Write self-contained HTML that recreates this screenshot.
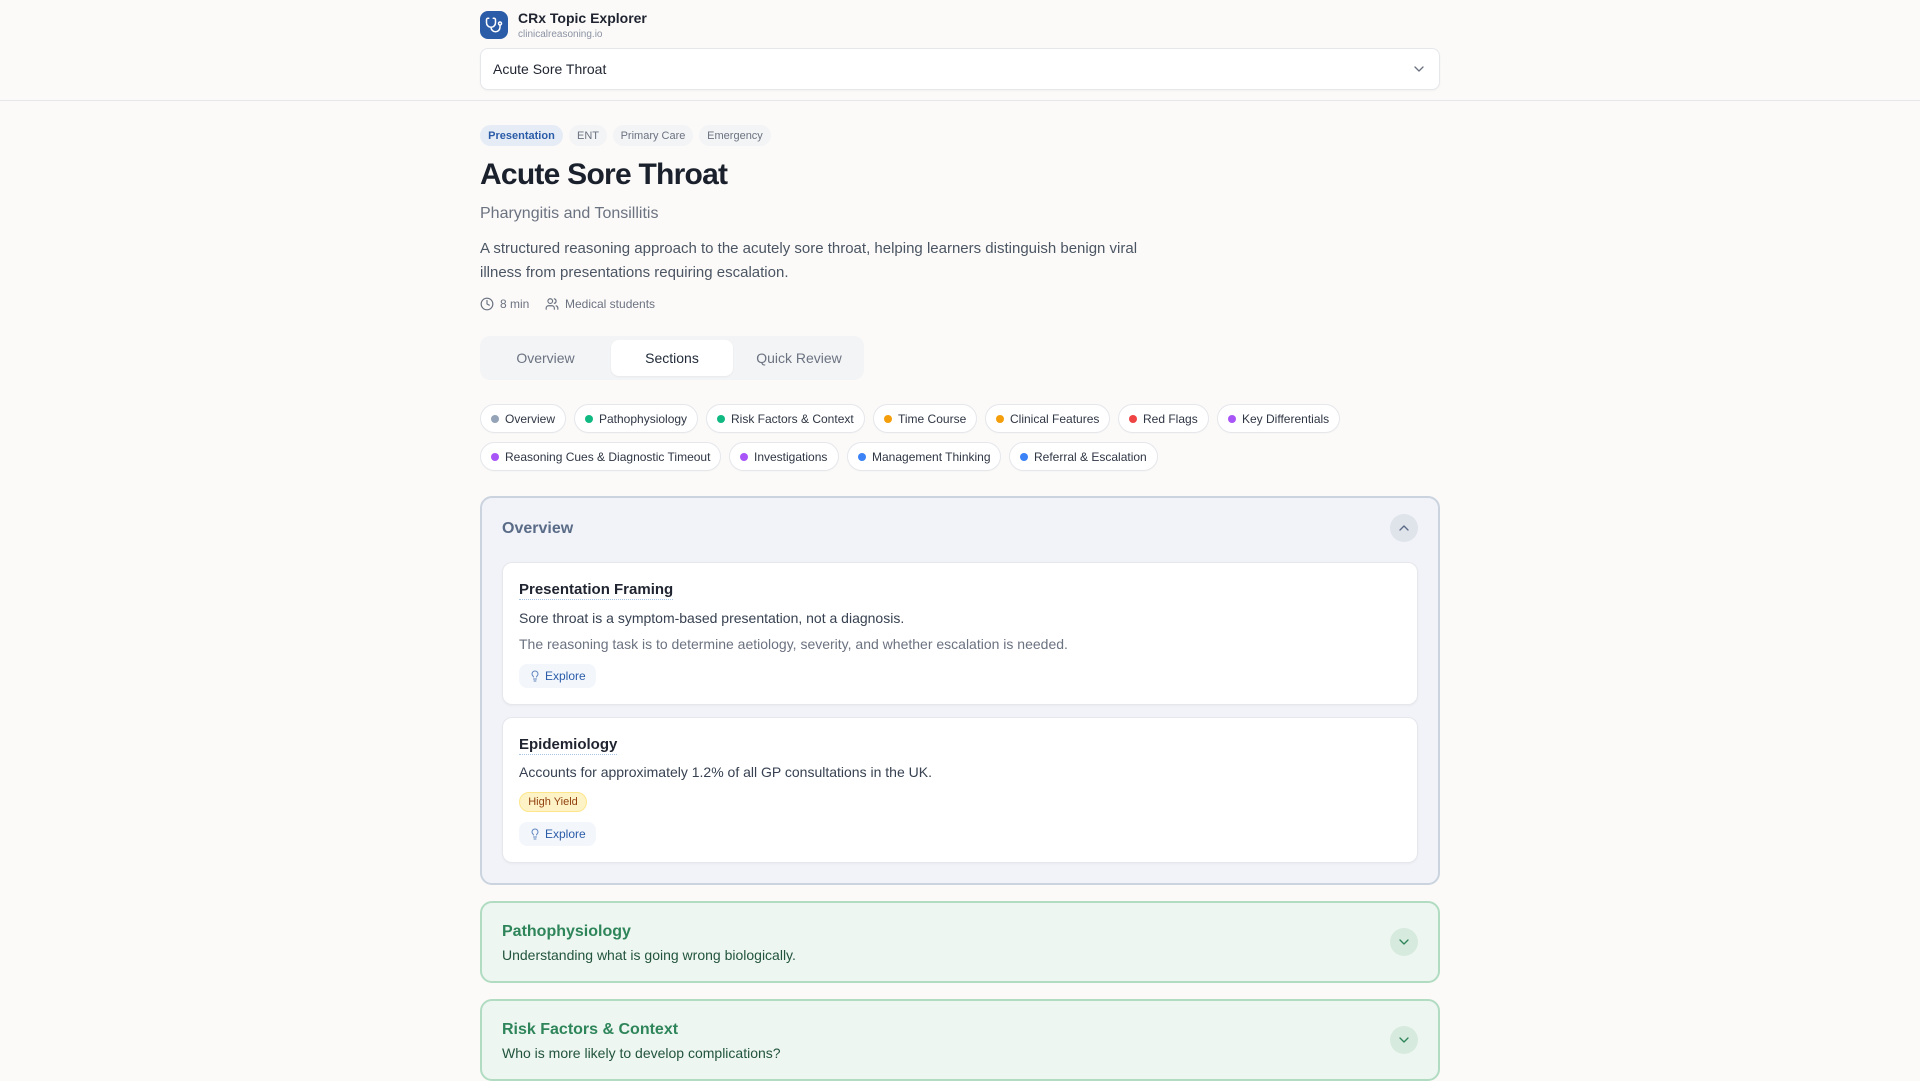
<!DOCTYPE html>
<html lang="en"><head><meta charset="utf-8"><title>CRx Topic Explorer</title>
<style>
*{box-sizing:border-box;margin:0;padding:0}
html,body{width:1920px;height:1080px;overflow:hidden;background:#fbfaf8;font-family:"Liberation Sans",sans-serif;color:#1f2430}
.a{position:absolute;white-space:nowrap}
#hdr{left:0;top:0;width:1920px;height:101px;border-bottom:1px solid #e5e7eb}
#logo{left:480px;top:11px;width:28px;height:28px;border-radius:8px;background:#2b5ca8;display:flex;align-items:center;justify-content:center}
#select{left:480px;top:48px;width:960px;height:42px;background:#fff;border:1px solid #e5e7eb;border-radius:8px;box-shadow:0 1px 2px rgba(0,0,0,.04);font-size:14px;line-height:40px;padding-left:12px;color:#1f2430}
.tag{top:125px;height:21px;border-radius:10.5px;background:#f3f4f6;color:#6b7280;font-size:11px;line-height:23px;text-align:center}
.tabs{left:480px;top:336px;width:384px;height:44px;border-radius:10px;background:#f3f4f6}
.tab{top:340px;height:36px;width:122px;line-height:36px;text-align:center;font-size:14px;color:#6b7280}
.pill{height:29px;background:#fff;border:1px solid #e5e7eb;border-radius:15px;font-size:12px;line-height:29px;color:#2f3644;padding-left:24px;box-shadow:0 1px 1px rgba(0,0,0,.02)}
.pill i{position:absolute;left:10px;top:9.5px;width:8px;height:8px;border-radius:50%}
.card{left:502px;width:916px;background:#fff;border:1px solid #e5e7eb;border-radius:10px;box-shadow:0 1px 2px rgba(0,0,0,.04)}
.ct{font-size:15px;font-weight:700;color:#1f2430;left:519px;border-bottom:1px dotted #a9c6e8;line-height:17px;height:19px}
.tx{font-size:14px;left:519px;line-height:18px;color:#374151}
.exp{left:519px;width:77px;height:24px;background:#f3f7fc;border-radius:8px;color:#2b5ca8;font-size:12px;line-height:24px;padding-left:26px}
.exp svg{position:absolute;left:10px;top:6px}
.sec{left:480px;width:960px;border:2px solid #b1dcc2;border-radius:12px;background:#edf6f1}
.st{left:502px;font-size:16px;font-weight:700;color:#2f855a;line-height:20px}
.ss{left:502px;font-size:14px;color:#22543d;line-height:18px}
.cb{width:28px;height:28px;border-radius:50%;left:1390px;display:flex;align-items:center;justify-content:center}
</style></head><body>

<div class="a" id="hdr"></div>
<div class="a" id="logo"><svg width="18" height="18" viewBox="0 0 24 24" fill="none" stroke="#fff" stroke-width="2" stroke-linecap="round" stroke-linejoin="round"><path d="M5 3H4a2 2 0 0 0-2 2v4a6 6 0 0 0 12 0V5a2 2 0 0 0-2-2h-1"/><path d="M8 15a6 6 0 0 0 12 0v-3"/><circle cx="20" cy="10" r="2"/></svg></div>
<div class="a" style="left:518px;top:10px;font-size:14px;font-weight:700;line-height:17px;color:#1f2430">CRx Topic Explorer</div>
<div class="a" style="left:518px;top:28px;font-size:10px;line-height:13px;color:#8b92a3">clinicalreasoning.io</div>
<div class="a" id="select">Acute Sore Throat</div>
<svg class="a" style="left:1411px;top:61px" width="16" height="16" viewBox="0 0 24 24" fill="none" stroke="#6b7280" stroke-width="2" stroke-linecap="round" stroke-linejoin="round"><path d="m6 9 6 6 6-6"/></svg>

<div class="a tag" style="left:480px;width:83px;background:#e6ecf5;color:#2b5ca8;font-weight:700">Presentation</div>
<div class="a tag" style="left:569px;width:38px">ENT</div>
<div class="a tag" style="left:613px;width:80px">Primary Care</div>
<div class="a tag" style="left:699px;width:72px">Emergency</div>

<div class="a" style="left:480px;top:157px;font-size:30px;font-weight:700;line-height:36px;letter-spacing:-.75px;color:#1a202c">Acute Sore Throat</div>
<div class="a" style="left:480px;top:204px;font-size:16px;line-height:20px;color:#6b7280">Pharyngitis and Tonsillitis</div>
<div class="a" style="left:480px;top:237px;font-size:15px;line-height:24px;color:#4b5563">A structured reasoning approach to the acutely sore throat, helping learners distinguish benign viral<br>illness from presentations requiring escalation.</div>

<svg class="a" style="left:480px;top:297px" width="14" height="14" viewBox="0 0 24 24" fill="none" stroke="#6b7280" stroke-width="2" stroke-linecap="round" stroke-linejoin="round"><circle cx="12" cy="12" r="10"/><path d="M12 6v6l4 2"/></svg>
<div class="a" style="left:500px;top:297px;font-size:12px;line-height:14px;color:#6b7280">8 min</div>
<svg class="a" style="left:545px;top:297px" width="14" height="14" viewBox="0 0 24 24" fill="none" stroke="#6b7280" stroke-width="2" stroke-linecap="round" stroke-linejoin="round"><path d="M16 21v-2a4 4 0 0 0-4-4H6a4 4 0 0 0-4 4v2"/><circle cx="9" cy="7" r="4"/><path d="M22 21v-2a4 4 0 0 0-3-3.87"/><path d="M16 3.13a4 4 0 0 1 0 7.75"/></svg>
<div class="a" style="left:565px;top:297px;font-size:12px;line-height:14px;color:#6b7280">Medical students</div>

<div class="a tabs"></div>
<div class="a tab" style="left:484.5px">Overview</div>
<div class="a tab" style="left:611px;background:#fff;border-radius:8px;color:#1f2937;box-shadow:0 1px 2px rgba(0,0,0,.05)">Sections</div>
<div class="a tab" style="left:738px">Quick Review</div>

<div class="a pill" style="left:480px;top:404px;width:86px"><i style="background:#94a3b8"></i>Overview</div>
<div class="a pill" style="left:574px;top:404px;width:124px"><i style="background:#10b981"></i>Pathophysiology</div>
<div class="a pill" style="left:706px;top:404px;width:159px"><i style="background:#10b981"></i>Risk Factors &amp; Context</div>
<div class="a pill" style="left:873px;top:404px;width:104px"><i style="background:#f59e0b"></i>Time Course</div>
<div class="a pill" style="left:985px;top:404px;width:125px"><i style="background:#f59e0b"></i>Clinical Features</div>
<div class="a pill" style="left:1118px;top:404px;width:91px"><i style="background:#ef4444"></i>Red Flags</div>
<div class="a pill" style="left:1217px;top:404px;width:123px"><i style="background:#a855f7"></i>Key Differentials</div>
<div class="a pill" style="left:480px;top:442px;width:241px"><i style="background:#a855f7"></i>Reasoning Cues &amp; Diagnostic Timeout</div>
<div class="a pill" style="left:729px;top:442px;width:110px"><i style="background:#a855f7"></i>Investigations</div>
<div class="a pill" style="left:847px;top:442px;width:154px"><i style="background:#3b82f6"></i>Management Thinking</div>
<div class="a pill" style="left:1009px;top:442px;width:149px"><i style="background:#3b82f6"></i>Referral &amp; Escalation</div>

<div class="a" style="left:480px;top:496px;width:960px;height:389px;border:2px solid #cbd3df;border-radius:12px;background:#f1f3f8"></div>
<div class="a" style="left:502px;top:519px;font-size:16px;font-weight:700;line-height:20px;color:#5a6b87">Overview</div>
<div class="a cb" style="top:514px;background:#dfe3ea"><svg width="16" height="16" viewBox="0 0 24 24" fill="none" stroke="#5a6b87" stroke-width="2" stroke-linecap="round" stroke-linejoin="round"><path d="m18 15-6-6-6 6"/></svg></div>

<div class="a card" style="top:562px;height:143px"></div>
<div class="a ct" style="top:581px">Presentation Framing</div>
<div class="a tx" style="top:609px">Sore throat is a symptom-based presentation, not a diagnosis.</div>
<div class="a tx" style="top:635px;color:#6b7280">The reasoning task is to determine aetiology, severity, and whether escalation is needed.</div>
<div class="a exp" style="top:664px"><svg width="12" height="12" viewBox="0 0 24 24" fill="none" stroke="#2b5ca8" stroke-opacity=".75" stroke-width="2" stroke-linecap="round" stroke-linejoin="round"><path d="M15 14c.2-1 .7-1.7 1.5-2.5 1-.9 1.5-2.2 1.5-3.5A6 6 0 0 0 6 8c0 1 .2 2.2 1.5 3.5.7.7 1.3 1.5 1.5 2.5"/><path d="M9 18h6"/><path d="M10 22h4"/></svg>Explore</div>

<div class="a card" style="top:717px;height:146px"></div>
<div class="a ct" style="top:736px">Epidemiology</div>
<div class="a tx" style="top:763px">Accounts for approximately 1.2% of all GP consultations in the UK.</div>
<div class="a" style="left:519px;top:792px;width:68px;height:20px;background:#fef3c7;border:1px solid #fde68a;border-radius:10px;color:#92400e;font-size:11px;line-height:18px;text-align:center">High Yield</div>
<div class="a exp" style="top:822px"><svg width="12" height="12" viewBox="0 0 24 24" fill="none" stroke="#2b5ca8" stroke-opacity=".75" stroke-width="2" stroke-linecap="round" stroke-linejoin="round"><path d="M15 14c.2-1 .7-1.7 1.5-2.5 1-.9 1.5-2.2 1.5-3.5A6 6 0 0 0 6 8c0 1 .2 2.2 1.5 3.5.7.7 1.3 1.5 1.5 2.5"/><path d="M9 18h6"/><path d="M10 22h4"/></svg>Explore</div>

<div class="a sec" style="top:901px;height:82px"></div>
<div class="a st" style="top:922px">Pathophysiology</div>
<div class="a ss" style="top:946px">Understanding what is going wrong biologically.</div>
<div class="a cb" style="top:928px;background:#d7eade"><svg width="16" height="16" viewBox="0 0 24 24" fill="none" stroke="#2f855a" stroke-width="2" stroke-linecap="round" stroke-linejoin="round"><path d="m6 9 6 6 6-6"/></svg></div>

<div class="a sec" style="top:999px;height:82px"></div>
<div class="a st" style="top:1020px">Risk Factors &amp; Context</div>
<div class="a ss" style="top:1044px">Who is more likely to develop complications?</div>
<div class="a cb" style="top:1026px;background:#d7eade"><svg width="16" height="16" viewBox="0 0 24 24" fill="none" stroke="#2f855a" stroke-width="2" stroke-linecap="round" stroke-linejoin="round"><path d="m6 9 6 6 6-6"/></svg></div>

</body></html>
